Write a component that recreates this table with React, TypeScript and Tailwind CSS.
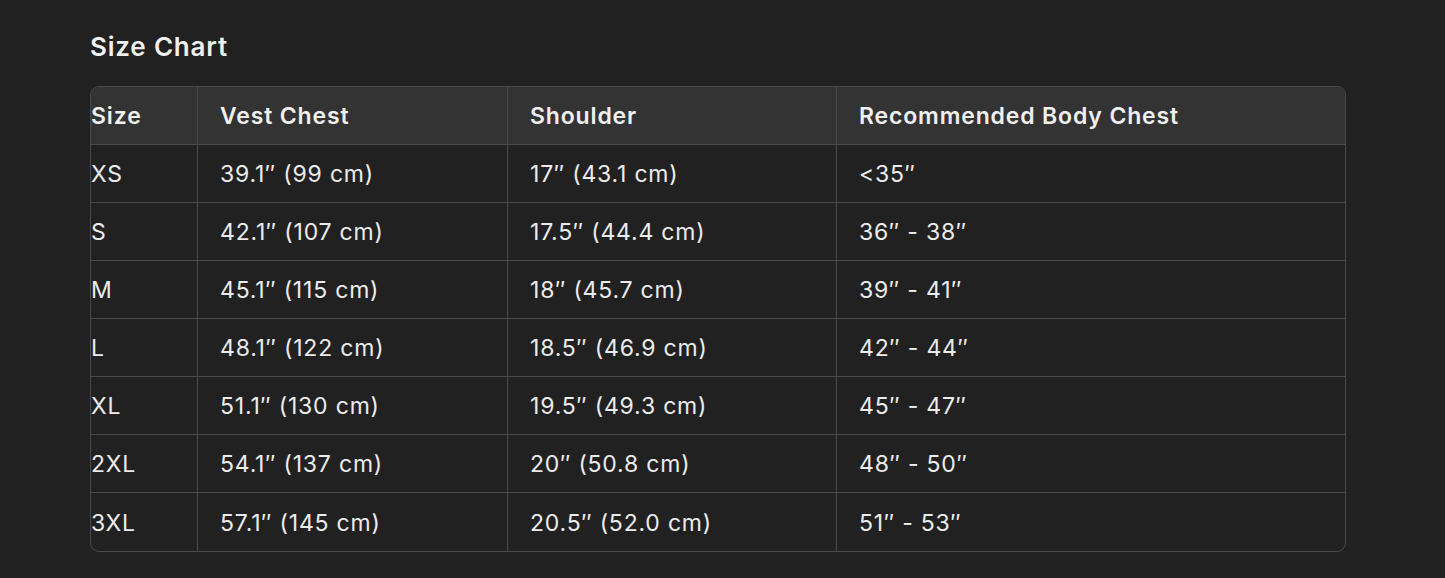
import React from "react";

const rows = [
  ["XS", "39.1″ (99 cm)", "17″ (43.1 cm)", "<35″"],
  ["S", "42.1″ (107 cm)", "17.5″ (44.4 cm)", "36″ - 38″"],
  ["M", "45.1″ (115 cm)", "18″ (45.7 cm)", "39″ - 41″"],
  ["L", "48.1″ (122 cm)", "18.5″ (46.9 cm)", "42″ - 44″"],
  ["XL", "51.1″ (130 cm)", "19.5″ (49.3 cm)", "45″ - 47″"],
  ["2XL", "54.1″ (137 cm)", "20″ (50.8 cm)", "48″ - 50″"],
  ["3XL", "57.1″ (145 cm)", "20.5″ (52.0 cm)", "51″ - 53″"],
];

const headers = ["Size", "Vest Chest", "Shoulder", "Recommended Body Chest"];
const widths = ["w-[107px]", "w-[310px]", "w-[329px]", "w-[508px]"];

export default function App() {
  return (
    <div
      className="w-[1445px] h-[578px] bg-[#212121] text-[#ececec] pl-[90px] pt-[30px]"
      style={{ fontFamily: "Inter, 'Noto Sans', sans-serif" }}
    >
      <h1 className="text-[26px] leading-[34px] font-semibold text-[#f0f0f0] mb-[22px] tracking-[0.8px]">
        Size Chart
      </h1>
      <div className="w-[1256px] border border-[#4a4a4a] rounded-[9px] overflow-hidden">
        <div className="flex bg-[#333333] border-b border-[#4a4a4a] h-[58px]">
          {headers.map((h, i) => (
            <div
              key={h}
              className={`${widths[i]} ${i < 3 ? "border-r border-[#4a4a4a]" : ""} ${
                i === 0 ? "pl-0" : "pl-[22px]"
              } pt-[2px] flex items-center text-[23px] tracking-[0.85px] font-semibold text-[#f0f0f0]`}
            >
              {h}
            </div>
          ))}
        </div>
        {rows.map((r, ri) => (
          <div
            key={ri}
            className={`flex h-[58px] ${ri < rows.length - 1 ? "border-b border-[#4a4a4a]" : ""}`}
          >
            {r.map((c, i) => (
              <div
                key={i}
                className={`${widths[i]} ${i < 3 ? "border-r border-[#4a4a4a]" : ""} ${
                  i === 0 ? "pl-0" : "pl-[22px]"
                } pt-[2px] flex items-center text-[23px] tracking-[0.8px] font-normal text-[#ececec]`}
              >
                {c}
              </div>
            ))}
          </div>
        ))}
      </div>
    </div>
  );
}
